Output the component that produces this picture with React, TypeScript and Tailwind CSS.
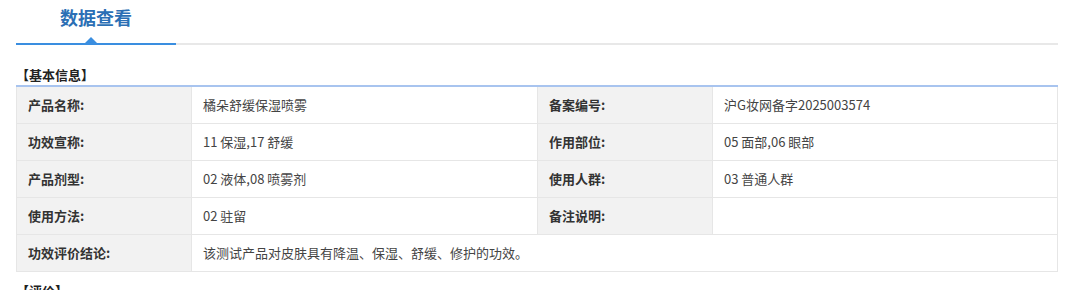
import React from "react";

const rows: [string, string, string | null, string | null][] = [
  ["产品名称:", "橘朵舒缓保湿喷雾", "备案编号:", "沪G妆网备字2025003574"],
  ["功效宣称:", "11 保湿,17 舒缓", "作用部位:", "05 面部,06 眼部"],
  ["产品剂型:", "02 液体,08 喷雾剂", "使用人群:", "03 普通人群"],
  ["使用方法:", "02 驻留", "备注说明:", ""],
];

export default function App() {
  return (
    <div
      className="w-[1080px] h-[290px] overflow-hidden bg-white px-4 text-[13px] text-[#333]"
      style={{ fontFamily: '"Microsoft YaHei", "Noto Sans CJK SC", "Noto Sans", sans-serif' }}
    >
      <div className="relative flex h-[45px] w-[1042px] border-b-2 border-[#e8e8e8]">
        <div className="relative -mb-[2px] flex w-[160px] justify-center border-b-2 border-[#3a8ee0] pt-[5px]">
          <span className="text-[18px] font-bold leading-[24px] text-[#2b6fb5]">数据查看</span>
          <span className="absolute bottom-0 left-[69px] h-0 w-0 border-x-[6px] border-b-[6px] border-x-transparent border-b-[#3a8ee0]" />
        </div>
      </div>
      <div className="mt-[22px] w-[1042px] border-b-2 border-[#a8c4ef] pb-[2px] text-[13px] font-bold leading-[16px] text-[#222]">
        【基本信息】
      </div>
      <div className="w-[1042px] border-x border-[#e6e6e6]">
        {rows.map(([l1, v1, l2, v2]) => (
          <div key={l1} className="flex h-[37px] border-b border-[#e6e6e6]">
            <div className="flex w-[174px] items-center bg-[#f2f2f2] pl-[11px] font-bold text-[#333]">{l1}</div>
            <div className="flex w-[347px] items-center border-x border-[#e6e6e6] pl-[11px] text-[#444]">{v1}</div>
            <div className="flex w-[174px] items-center bg-[#f2f2f2] pl-[11px] font-bold text-[#333]">{l2}</div>
            <div className="flex flex-1 items-center border-l border-[#e6e6e6] pl-[11px] text-[#444]">{v2}</div>
          </div>
        ))}
        <div className="flex h-[37px] border-b border-[#e6e6e6]">
          <div className="flex w-[174px] items-center bg-[#f2f2f2] pl-[11px] font-bold text-[#333]">功效评价结论:</div>
          <div className="flex flex-1 items-center border-l border-[#e6e6e6] pl-[11px] text-[#444]">
            该测试产品对皮肤具有降温、保湿、舒缓、修护的功效。
          </div>
        </div>
      </div>
      <div className="mt-[11px] text-[13px] font-bold leading-[16px] text-[#222]">【评价】</div>
    </div>
  );
}
